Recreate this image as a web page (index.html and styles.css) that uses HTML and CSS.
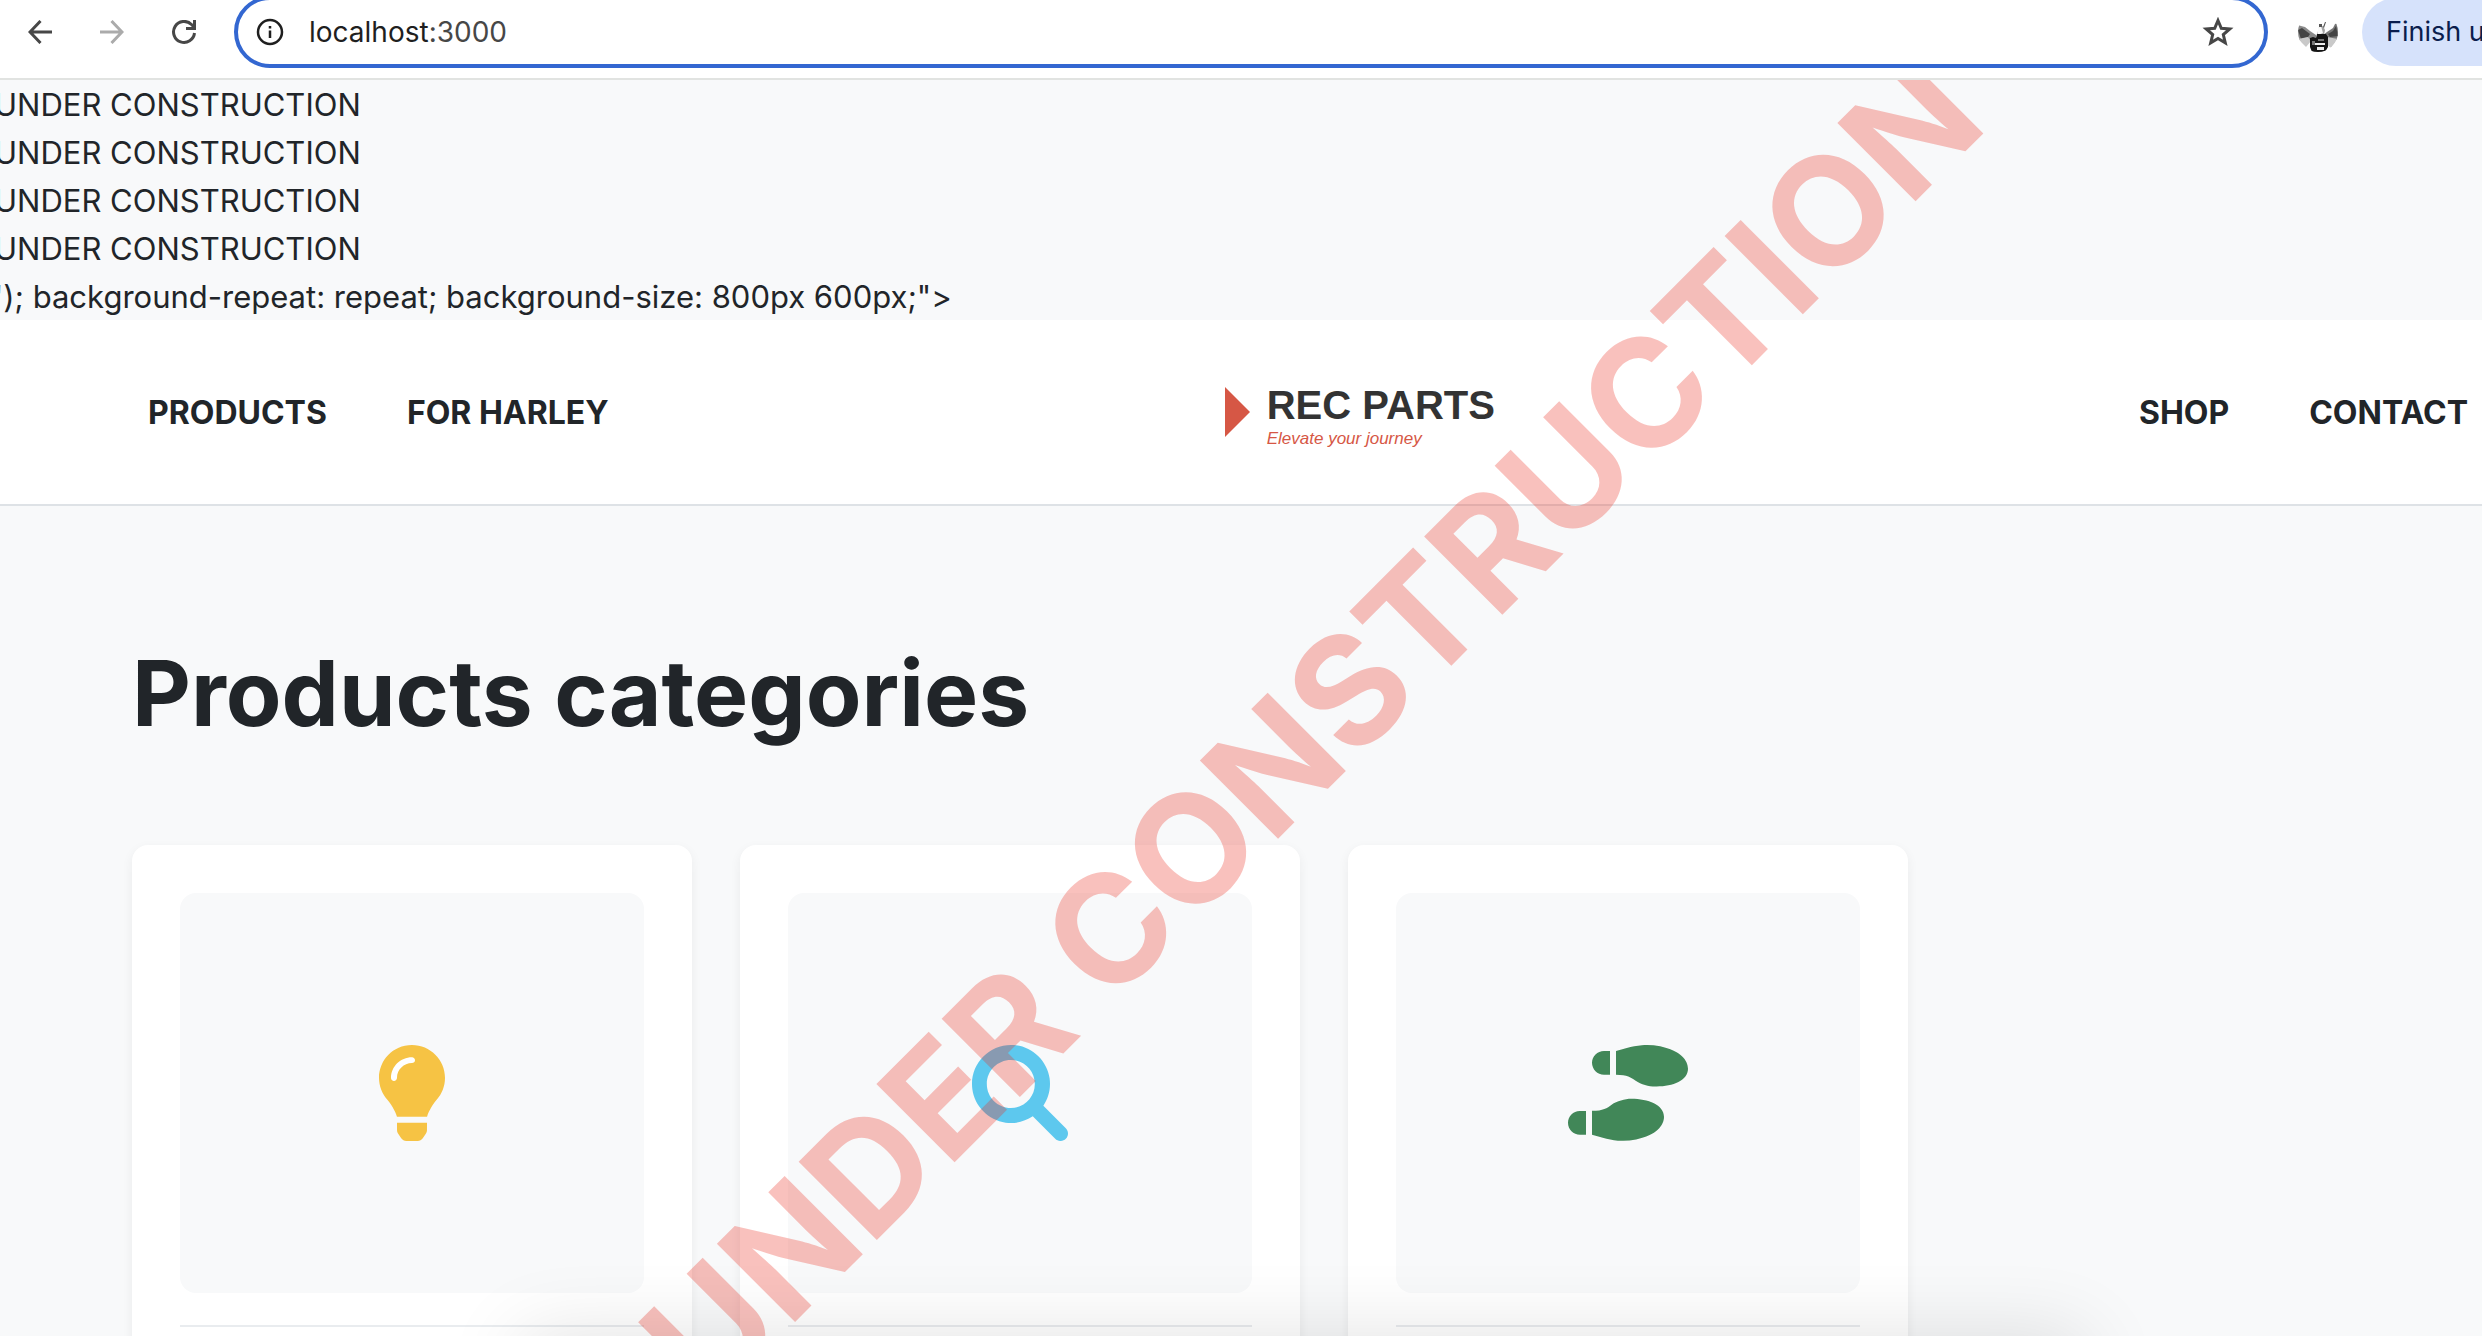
FILE: index.html
```html
<!DOCTYPE html>
<html lang="en">
<head>
<meta charset="utf-8">
<title>REC PARTS</title>
<link rel="stylesheet" href="styles.css">
</head>
<body>
<div class="toolbar">
  <div class="toolbar-nav">
    <button type="button" class="icon-button" aria-label="Back">
      <svg width="24" height="24" viewBox="0 0 24 24" fill="none" stroke="currentColor" stroke-width="3"><path d="M24 12H2M12.500 1L2 12L12.500 23"/></svg>
    </button>
    <button type="button" class="icon-button" aria-label="Forward" disabled>
      <svg width="24" height="24" viewBox="0 0 24 24" fill="none" stroke="currentColor" stroke-width="3"><path d="M0 12H22M11.500 1L22 12L11.500 23"/></svg>
    </button>
    <button type="button" class="icon-button" aria-label="Reload">
      <svg width="24" height="24" viewBox="0 0 24 24" fill="none" stroke="currentColor" stroke-width="3"><path d="M22.500 13A10.500 10.500 0 1 1 19.500 4.500L22 7"/><path d="M22.500 0V8.500H14"/></svg>
    </button>
  </div>
  <div class="address">
    <svg class="info" width="28" height="28" viewBox="0 0 28 28" fill="none" stroke="currentColor" stroke-width="2.500"><circle cx="14" cy="14" r="12"/><path d="M14 12.500V20M14 8V10.500"/></svg>
    <div class="url" role="textbox" aria-label="Address" tabindex="0">localhost<span class="port">:3000</span></div>
    <button type="button" class="icon-button" aria-label="Bookmark this page">
      <svg width="32" height="30" viewBox="0 0 32 30" fill="none" stroke="currentColor" stroke-width="3"><path d="M16 3.500L19.300 11.300L27.800 12L21.300 17.600L23.300 25.900L16 21.500L8.700 25.900L10.700 17.600L4.200 12L12.700 11.300Z"/></svg>
    </button>
  </div>
  <svg class="avatar" width="40" height="40" viewBox="0 0 40 40" aria-label="Profile">
    <defs><clipPath id="round"><circle cx="20" cy="20" r="20"/></clipPath></defs>
    <g clip-path="url(#round)">
      <path fill="#fff" d="M0 0h40v40H0z"/>
      <path fill="#8a8a8a" d="M0 13l3 1 4 1 5 4 6 4v4L8 30 0 28z"/>
      <path fill="#777" d="M40 11l-3 1-2 4-6 4-4 3 3 4 12 1z"/>
      <path fill="#444" d="M0 18l4-2 4 3 4 3-2 3-7 2zM38 14l-3 5-5 3 2 3 8-1z"/>
      <path fill="#c9c9c9" d="M0 27l10-2 3 4-5 6zM29 25l11 2-7 9-5-4z"/>
      <path fill="#a5a5a5" d="M21 15l4-1 2 4-1 5h-7z"/>
      <path fill="#fafafa" d="M20 16l3-2 2 7-5 2z"/>
      <path fill="#555" d="M21 12h3v3h-3zM27 10h1l-2 6-1-1z"/>
      <path fill="#151515" d="M19 22h9l2 3v10l-3 5H14l-2-5V26l3-1 3 1z"/>
      <path fill="#ededed" d="M17 31h10v2H17zM19 35h7v3h-7z"/>
      <path fill="#777" d="M14 29h3v4h-3zM20 27h6v2h-6z"/>
    </g>
  </svg>
  <button type="button" class="update">Finish update</button>
</div>

<div class="page">
  <div class="leak">
    <div>UNDER CONSTRUCTION</div>
    <div>UNDER CONSTRUCTION</div>
    <div>UNDER CONSTRUCTION</div>
    <div>UNDER CONSTRUCTION</div>
    <div>'); background-repeat: repeat; background-size: 800px 600px;"&gt;</div>
  </div>

  <header class="header">
    <nav class="nav">
      <a href="#products">PRODUCTS</a>
      <a href="#harley">FOR HARLEY</a>
    </nav>
    <a class="logo" href="#home">
      <svg width="26" height="50" viewBox="0 0 26 50"><path fill="#d65745" d="M0 0L25 25L0 50Z"/></svg>
      <span class="logo-text">
        <span class="logo-name">REC PARTS</span>
        <span class="logo-tag">Elevate your journey</span>
      </span>
    </a>
    <nav class="nav">
      <a href="#shop">SHOP</a>
      <a href="#contact">CONTACT</a>
    </nav>
  </header>

  <main class="content">
    <h1 class="title">Products categories</h1>
    <div class="cards">
      <article class="card">
        <div class="thumb bulb">
          <svg width="72" height="96" viewBox="0 0 384 512" fill="currentColor"><path d="M112.100 454.300c0 6.297 1.816 12.440 5.284 17.690l17.140 25.690c5.250 7.875 17.170 14.280 26.640 14.280h61.670c9.438 0 21.360-6.401 26.610-14.280l17.080-25.680c2.938-4.438 5.348-12.370 5.348-17.700L272 415.100h-160L112.100 454.300zM191.400 .0132C89.440 .3257 16 82.970 16 175.100c0 44.380 16.440 84.840 43.560 115.800c16.530 18.840 42.340 58.230 52.220 91.450c.0313 .25 .0938 .5166 .125 .7823h160.200c.0313-.2656 .0938-.5166 .125-.7823c9.875-33.220 35.690-72.610 52.220-91.450C351.600 260.800 368 220.400 368 175.100C368 78.610 288.900-.2837 191.400 .0132z"/><path fill="#fff" d="M192 96.010c-44.130 0-80 35.890-80 79.100C112 184.800 104.800 192 96 192S80 184.800 80 176c0-61.760 50.250-111.100 112-111.100c8.844 0 16 7.159 16 16S200.800 96.010 192 96.010z"/></svg>
        </div>
        <hr class="rule">
      </article>
      <article class="card">
        <div class="thumb lens">
          <svg width="96" height="96" viewBox="0 0 512 512" fill="currentColor"><path d="M500.300 443.700l-119.700-119.700c27.220-40.410 40.650-90.900 33.460-144.700C401.800 87.790 326.800 13.320 235.200 1.723C99.010-15.510-15.510 99.010 1.724 235.200c11.600 91.640 86.080 166.700 177.600 178.900c53.800 7.189 104.300-6.236 144.700-33.460l119.700 119.700c15.620 15.620 40.950 15.620 56.570 0C515.900 484.700 515.900 459.300 500.300 443.700zM79.100 208c0-70.580 57.420-128 128-128s128 57.420 128 128c0 70.580-57.420 128-128 128S79.100 278.600 79.100 208z"/></svg>
        </div>
        <hr class="rule">
      </article>
      <article class="card">
        <div class="thumb shoes">
          <svg width="120" height="96" viewBox="0 0 640 512" fill="currentColor"><path d="M192 159.100L224 159.100V32L192 32c-35.380 0-64 28.620-64 63.100S156.600 159.100 192 159.100zM0 415.100c0 35.370 28.620 64.010 64 64.010l32-.0103v-127.100l-32-.0005C28.620 351.100 0 380.600 0 415.100zM337.500 287.100c-35 0-76.250 13.120-104.800 31.100C208 336.400 188.300 351.100 128 351.100v128l57.500 15.980c26.250 7.250 53 13.130 80.380 15.010c32.630 2.375 65.630 .743 97.500-6.132C472.900 481.200 512 429.200 512 383.100C512 319.100 427.900 287.100 337.500 287.100zM491.400 7.252c-31.880-6.875-64.880-8.625-97.500-6.250C366.500 2.877 339.800 8.752 313.500 16L256 32V159.100c60.250 0 80 15.620 104.800 31.100c28.500 18.870 69.750 31.100 104.800 31.100C555.900 223.100 640 191.100 640 127.100C640 82.750 600.900 30.750 491.400 7.252z"/></svg>
        </div>
        <hr class="rule">
      </article>
    </div>
  </main>

  <div class="watermark">UNDER CONSTRUCTION</div>
  <div class="dock-shadow"></div>
</div>
</body>
</html>
```
FILE: styles.css
```css
* {
  box-sizing: border-box;
}

html,
body {
  height: 100%;
}

body {
  margin: 0;
  display: flex;
  flex-direction: column;
  overflow: hidden;
  background: #f8f9fa;
  color: #212529;
  font-family: Inter, "Liberation Sans", sans-serif;
  font-size: 31px;
  line-height: 48px;
}

button {
  font: inherit;
  color: inherit;
  border: 0;
  padding: 0;
  background: none;
}

a {
  color: inherit;
  text-decoration: none;
}

svg {
  display: block;
  flex: none;
}

/* Browser toolbar */

.toolbar {
  flex: none;
  display: flex;
  align-items: center;
  height: 80px;
  padding-bottom: 14px;
  border-bottom: 2px solid #e1e3e1;
  background: #fff;
  overflow: hidden;
}

.toolbar-nav {
  display: flex;
  gap: 48px;
  padding: 0 38px 0 28px;
}

.icon-button {
  color: #474747;
}

.icon-button:disabled {
  color: #ababab;
}

.address {
  flex: 1;
  display: flex;
  align-items: center;
  height: 72px;
  padding: 0 30px 0 18px;
  border: 4px solid #3367d1;
  border-radius: 36px;
  font-size: 28px;
}

.info {
  color: #1f1f1f;
}

.url {
  flex: 1;
  padding-left: 25px;
  color: #1f1f1f;
}

.port {
  color: #474747;
}

.avatar {
  margin: 0 24px 0 30px;
}

.update {
  width: 120px;
  height: 68px;
  padding-left: 24px;
  border-radius: 34px 0 0 34px;
  background: #d6e2fb;
  color: #0a1d4d;
  font-size: 27px;
  text-align: left;
  white-space: nowrap;
  overflow: hidden;
}

/* Page */

.page {
  flex: 1;
  position: relative;
  overflow: hidden;
}

.leak {
  height: 240px;
  padding-top: 1px;
  margin-left: -6px;
}

.header {
  display: flex;
  align-items: center;
  justify-content: space-between;
  height: 186px;
  padding: 0 14px 0 148px;
  border-bottom: 2px solid #dee2e6;
  background: #fff;
}

.nav {
  display: flex;
  gap: 80px;
  padding-top: 1px;
  font-size: 32px;
  font-weight: 700;
}

.logo {
  display: flex;
  align-items: center;
  gap: 16px;
  margin-right: 28px;
  font-family: "Liberation Sans", Arial, sans-serif;
}

.logo-text {
  display: flex;
  flex-direction: column;
  gap: 4px;
  padding-top: 10px;
}

.logo-name {
  font-size: 40px;
  font-weight: 700;
  line-height: 40px;
  color: #333;
}

.logo-tag {
  font-size: 17px;
  font-style: italic;
  line-height: 20px;
  color: #d65745;
}

.content {
  padding: 130px 132px 0;
}

.title {
  margin: 0 0 94px;
  font-size: 91px;
  font-weight: 700;
  line-height: 115px;
}

.cards {
  display: grid;
  grid-template-columns: repeat(3, 560px);
  gap: 48px;
}

.card {
  height: 640px;
  padding: 48px;
  border-radius: 16px;
  background: #fff;
  box-shadow: 0 4px 12px rgba(0, 0, 0, 0.06);
}

.thumb {
  display: flex;
  align-items: center;
  justify-content: center;
  height: 400px;
  border-radius: 16px;
  background: #f8f9fa;
}

.bulb {
  color: #f6c344;
}

.lens {
  color: #5dc8ee;
}

.shoes {
  color: #418758;
}

.rule {
  margin: 32px 0 0;
  border: 0;
  border-top: 2px solid #e9ecef;
}

/* Diagonal stamp laid over the page */

.watermark {
  position: absolute;
  top: 648px;
  left: calc(50% + 70px);
  transform: translate(-50%, -50%) rotate(-45deg);
  color: rgba(234, 51, 35, 0.3);
  font-size: 152px;
  font-weight: 700;
  line-height: 160px;
  white-space: nowrap;
  pointer-events: none;
}

.dock-shadow {
  position: absolute;
  top: 100%;
  left: 21%;
  right: 16%;
  height: 80px;
  box-shadow: 0 0 80px rgba(0, 0, 0, 0.12);
  pointer-events: none;
}
```
